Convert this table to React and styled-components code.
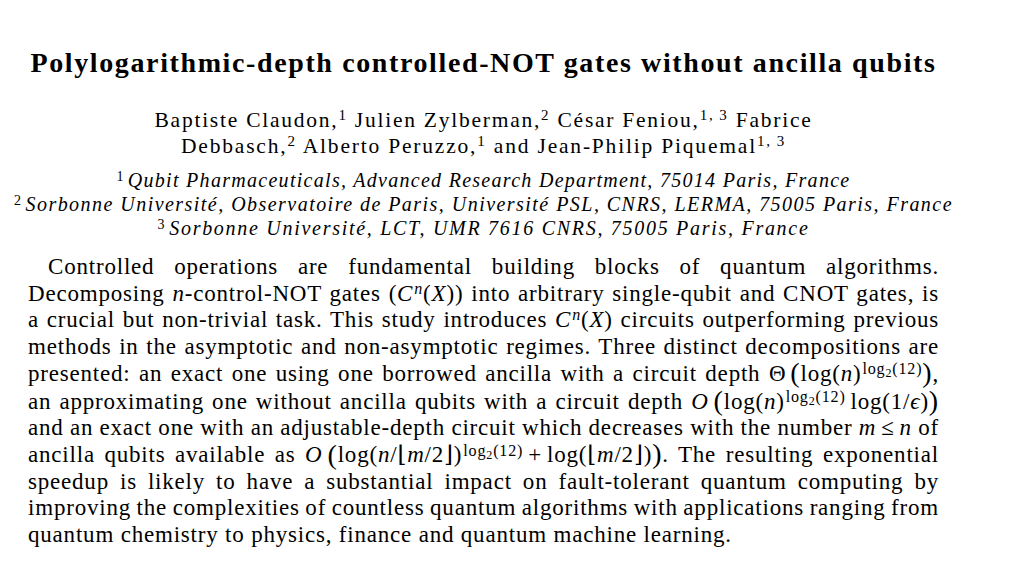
import React, { useLayoutEffect, useRef, useState } from 'react';
import styled, { createGlobalStyle } from 'styled-components';

const GlobalStyle = createGlobalStyle`
  html, body {
    margin: 0;
    padding: 0;
    background: #fff;
  }
  body {
    font-family: "Liberation Serif", "DejaVu Serif", serif;
    color: #000;
  }
`;

// widths measured off the typeset page, each line is stretched to its width
const useFit = (target, mode) => {
  const ref = useRef(null);
  const [spacing, setSpacing] = useState(0);

  useLayoutEffect(() => {
    const el = ref.current;
    if (!el || !target) return;
    const prop = mode === 'word' ? 'wordSpacing' : 'letterSpacing';
    const measure = () => {
      el.style[prop] = '0px';
      const natural = el.getBoundingClientRect().width;
      const text = el.textContent;
      const count = mode === 'word' ? text.split(' ').length - 1 : text.length;
      const next = count ? (target - natural) / count : 0;
      el.style[prop] = `${next}px`;
      setSpacing(next);
    };
    measure();
    if (document.fonts && document.fonts.ready) document.fonts.ready.then(measure);
  }, [target, mode]);

  return [ref, spacing];
};

const Fitted = ({ as: Comp, target, mode = 'letter', children, ...rest }) => {
  const [ref, spacing] = useFit(target, mode);
  const prop = mode === 'word' ? 'wordSpacing' : 'letterSpacing';
  const style = target ? { [prop]: `${spacing}px` } : undefined;
  return (
    <Comp ref={ref} style={style} {...rest}>
      {children}
    </Comp>
  );
};

const Page = styled.main`
  width: 911px;
  padding: 47px 0 0 28px;
  display: flex;
  flex-direction: column;
`;

const Header = styled.header`
  display: flex;
  flex-direction: column;
  align-items: center;
`;

const Title = styled.h1`
  margin: 0;
  height: 32px;
  line-height: 32px;
  font-size: 28px;
  font-weight: 700;
  white-space: nowrap;
`;

const Authors = styled.div`
  margin-top: 27.7px;
  display: flex;
  flex-direction: column;
  align-items: center;
`;

const AuthorLine = styled.div`
  height: 26.7px;
  line-height: 26.7px;
  font-size: 21.5px;
  white-space: nowrap;
`;

const Affiliations = styled.div`
  margin-top: 7.9px;
  display: flex;
  flex-direction: column;
  align-items: center;
`;

const AffilLine = styled.div`
  height: 24px;
  line-height: 24px;
  font-size: 20px;
  font-style: italic;
  white-space: nowrap;
`;

const Mark = styled.sup`
  font-style: normal;
  font-size: 0.7em;
  line-height: 0;
  vertical-align: 0.45em;
  margin-right: ${(p) => (p.$lead ? '3px' : '0')};
`;

const Abstract = styled.section`
  margin-top: 14.4px;
  font-size: 23px;
  letter-spacing: 0.8px;
`;

const AbstractLine = styled.div`
  width: max-content;
  height: ${(p) => (p.$tall ? 27.6 : 26.4)}px;
  line-height: ${(p) => (p.$tall ? 27.6 : 26.4)}px;
  padding-left: ${(p) => (p.$indent ? 20 : 0)}px;
  white-space: nowrap;
`;

const Var = styled.i`
  font-style: italic;
`;

const Cal = styled.i`
  font-style: italic;
  margin-right: 1px;
`;

const Sup = styled.sup`
  font-size: 0.7em;
  line-height: 0;
  vertical-align: 0.42em;
  margin-left: 1px;
`;

const Sub = styled.sub`
  font-size: 0.75em;
  line-height: 0;
  vertical-align: -0.25em;
`;

const BigParen = styled.span`
  font-size: 1.22em;
  line-height: 0;
  vertical-align: -0.05em;
  margin-left: ${(p) => (p.$open ? '4px' : '0')};
`;

const Op = styled.span`
  margin: 0 5px;
`;

const Thin = styled.span`
  display: inline-block;
  width: ${(p) => p.$w || 4}px;
`;

const Cnx = () => (
  <>
    <Var>C</Var>
    <Sup>
      <Var>n</Var>
    </Sup>
    (<Var>X</Var>)
  </>
);

const LogPow = () => (
  <Sup>
    log<Sub>2</Sub>(12)
  </Sup>
);

const LINE = 911;

export default function App() {
  return (
    <>
      <GlobalStyle />
      <Page>
        <Header>
          <Fitted as={Title} target={906}>
            Polylogarithmic-depth controlled-NOT gates without ancilla qubits
          </Fitted>
          <Authors>
            <Fitted as={AuthorLine} target={658}>
              Baptiste Claudon,<Mark>1</Mark> Julien Zylberman,<Mark>2</Mark> César Feniou,<Mark>1,{'\u2009'}3</Mark> Fabrice
            </Fitted>
            <Fitted as={AuthorLine} target={605}>
              Debbasch,<Mark>2</Mark> Alberto Peruzzo,<Mark>1</Mark> and Jean-Philip Piquemal<Mark>1,{'\u2009'}3</Mark>
            </Fitted>
          </Authors>
          <Affiliations>
            <Fitted as={AffilLine} target={734}>
              <Mark $lead>1</Mark>Qubit Pharmaceuticals, Advanced Research Department, 75014 Paris, France
            </Fitted>
            <Fitted as={AffilLine} target={939}>
              <Mark $lead>2</Mark>Sorbonne Université, Observatoire de Paris, Université PSL, CNRS, LERMA, 75005 Paris, France
            </Fitted>
            <Fitted as={AffilLine} target={652}>
              <Mark $lead>3</Mark>Sorbonne Université, LCT, UMR 7616 CNRS, 75005 Paris, France
            </Fitted>
          </Affiliations>
        </Header>

        <Abstract>
          <Fitted as={AbstractLine} $indent target={LINE} mode="word">
            Controlled operations are fundamental building blocks of quantum algorithms.
          </Fitted>
          <Fitted as={AbstractLine} target={LINE} mode="word">
            Decomposing <Var>n</Var>-control-NOT gates (<Cnx />) into arbitrary single-qubit and CNOT gates, is
          </Fitted>
          <Fitted as={AbstractLine} target={LINE} mode="word">
            a crucial but non-trivial task. This study introduces <Cnx /> circuits outperforming previous
          </Fitted>
          <Fitted as={AbstractLine} target={LINE} mode="word">
            methods in the asymptotic and non-asymptotic regimes. Three distinct decompositions are
          </Fitted>
          <Fitted as={AbstractLine} $tall target={LINE} mode="word">
            presented: an exact one using one borrowed ancilla with a circuit depth Θ<BigParen $open>(</BigParen>log(<Var>n</Var>)<LogPow /><BigParen>)</BigParen>,
          </Fitted>
          <Fitted as={AbstractLine} $tall target={LINE} mode="word">
            an approximating one without ancilla qubits with a circuit depth <Cal>O</Cal><BigParen $open>(</BigParen>log(<Var>n</Var>)<LogPow /><Thin $w={5} />log(1/<Var>ϵ</Var>)<BigParen>)</BigParen>
          </Fitted>
          <Fitted as={AbstractLine} target={LINE} mode="word">
            and an exact one with an adjustable-depth circuit which decreases with the number <Var>m</Var><Op>≤</Op><Var>n</Var> of
          </Fitted>
          <Fitted as={AbstractLine} $tall target={LINE} mode="word">
            ancilla qubits available as <Cal>O</Cal><BigParen $open>(</BigParen>log(<Var>n</Var>/⌊<Var>m</Var>/2⌋)<LogPow /><Op>+</Op>log(⌊<Var>m</Var>/2⌋)<BigParen>)</BigParen>. The resulting exponential
          </Fitted>
          <Fitted as={AbstractLine} target={LINE} mode="word">
            speedup is likely to have a substantial impact on fault-tolerant quantum computing by
          </Fitted>
          <Fitted as={AbstractLine} target={LINE} mode="word">
            improving the complexities of countless quantum algorithms with applications ranging from
          </Fitted>
          <AbstractLine>
            quantum chemistry to physics, finance and quantum machine learning.
          </AbstractLine>
        </Abstract>
      </Page>
    </>
  );
}
